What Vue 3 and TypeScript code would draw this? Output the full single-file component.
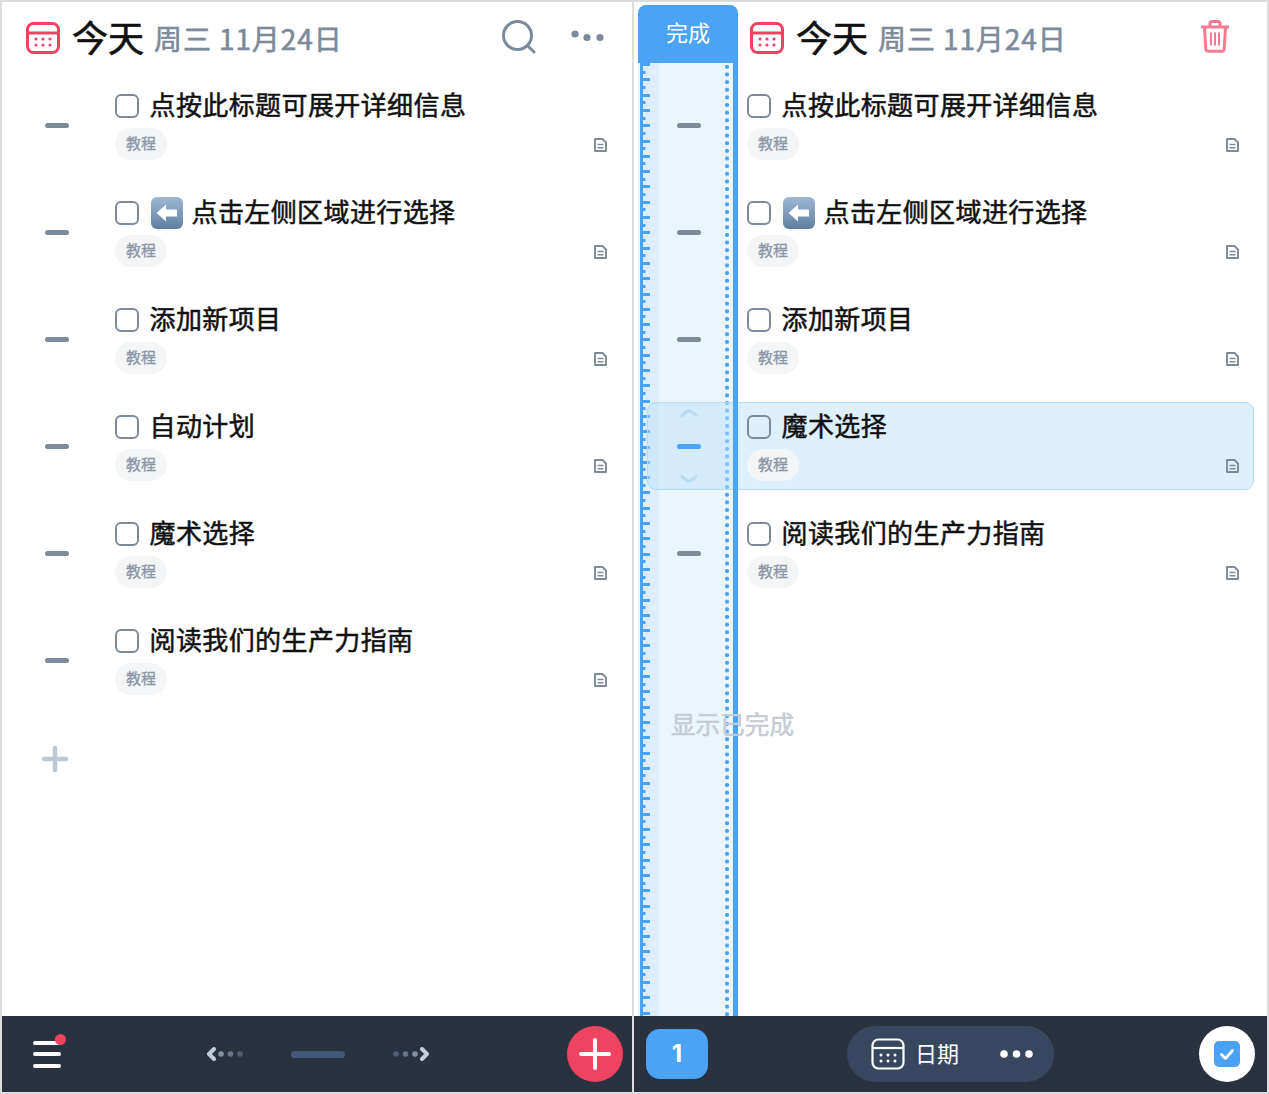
<script setup lang="ts">
const leftRows = [
  { title: "点按此标题可展开详细信息" },
  { title: "点击左侧区域进行选择", arrow: true },
  { title: "添加新项目" },
  { title: "自动计划" },
  { title: "魔术选择" },
  { title: "阅读我们的生产力指南" },
];

const rightRows = [
  { title: "点按此标题可展开详细信息" },
  { title: "点击左侧区域进行选择", arrow: true },
  { title: "添加新项目" },
  { title: "魔术选择", selected: true },
  { title: "阅读我们的生产力指南" },
];

const panes = [
  { id: "left", rows: leftRows },
  { id: "right", rows: rightRows },
];
</script>

<template>
  <div class="screen">
    <section v-for="pane in panes" :key="pane.id" class="pane" :class="pane.id">
      <header class="head">
        <svg class="cal" width="34" height="32" viewBox="0 0 34 32" fill="none">
          <rect x="1.5" y="1.5" width="31" height="29" rx="6" stroke="#ee4462" stroke-width="3" />
          <path d="M2 11h30" stroke="#ee4462" stroke-width="3" />
          <g fill="#ee4462">
            <circle cx="10" cy="17" r="1.6" /><circle cx="17" cy="17" r="1.6" /><circle cx="24" cy="17" r="1.6" />
            <circle cx="10" cy="23" r="1.6" /><circle cx="17" cy="23" r="1.6" /><circle cx="24" cy="23" r="1.6" />
          </g>
        </svg>
        <span class="today">今天</span>
        <span class="date">周三 11月24日</span>
        <template v-if="pane.id === 'left'">
          <svg class="search" width="34" height="34" viewBox="0 0 34 34" fill="none" stroke="#7c8a9a" stroke-width="3" stroke-linecap="round">
            <circle cx="15.500" cy="15.500" r="14" />
            <path d="M26 26l6 6" />
          </svg>
          <svg class="more" width="34" height="12" viewBox="0 0 34 12" fill="#7c8a9a">
            <circle cx="4" cy="4" r="3.600" /><circle cx="16" cy="7.500" r="3.600" /><circle cx="29" cy="7.500" r="3.600" />
          </svg>
        </template>
        <svg v-else class="trash" width="28" height="33" viewBox="0 0 28 33" fill="none" stroke="#f77a92" stroke-width="3" stroke-linejoin="round">
          <path d="M1 7h26" stroke-linecap="round" />
          <path d="M9 7V3.500A2 2 0 0 1 11 1.500h6a2 2 0 0 1 2 2V7" />
          <path d="M3.500 7l1.300 22a2.500 2.500 0 0 0 2.500 2.300h13.400a2.500 2.500 0 0 0 2.500-2.300L24.500 7" />
          <path d="M10 12.500v13M14 12.500v13M18 12.500v13" stroke-width="2" />
        </svg>
      </header>

      <template v-if="pane.id === 'right'">
        <div class="strip">
          <div class="strip-head">完成</div>
          <div class="strip-body"></div>
        </div>
        <div class="strip-edge"></div>
      </template>

      <main class="list">
        <article v-for="row in pane.rows" :key="row.title" class="row" :class="{ selected: row.selected }">
          <div class="handle">
            <svg v-if="row.selected" class="chev up" width="18" height="8" viewBox="0 0 18 8" fill="none" stroke="#b6dbf6" stroke-width="3" stroke-linecap="round" stroke-linejoin="round">
              <path d="M2 6.500C5 3.500 7 2 9 2s4 1.500 7 4.500" />
            </svg>
            <span class="minus"></span>
            <svg v-if="row.selected" class="chev down" width="18" height="8" viewBox="0 0 18 8" fill="none" stroke="#b6dbf6" stroke-width="3" stroke-linecap="round" stroke-linejoin="round">
              <path d="M2 1.500C5 4.500 7 6 9 6s4-1.500 7-4.500" />
            </svg>
          </div>
          <div class="body">
            <div class="title-line">
              <span class="check"></span>
              <svg v-if="row.arrow" class="emoji" width="32" height="32" viewBox="0 0 32 32">
                <defs>
                  <linearGradient :id="pane.id + 'arrowbg'" x1="0" y1="0" x2="0" y2="1">
                    <stop offset="0" stop-color="#9db8d6" />
                    <stop offset="1" stop-color="#5f7f9f" />
                  </linearGradient>
                </defs>
                <rect width="32" height="32" rx="6" :fill="`url(#${pane.id}arrowbg)`" />
                <path d="M5.500 16L15 7.500V12.500H26V19.500H15V24.500Z" fill="#fff" />
              </svg>
              <span class="title">{{ row.title }}</span>
            </div>
            <span class="tag">教程</span>
          </div>
          <svg class="doc" width="13" height="14" viewBox="0 0 13 14" fill="none" stroke="#7c8a9a" stroke-width="1.900" stroke-linejoin="round">
            <path d="M1 1h7.500L12 4.500V13H1Z" />
            <path d="M3.500 6.500h6M3.500 9.800h6" stroke-width="1.400" />
          </svg>
        </article>
        <div class="add">
          <svg width="26" height="26" viewBox="0 0 26 26" stroke="#bcc8d3" stroke-width="4.500" stroke-linecap="round">
            <path d="M2 13h22M13 2v22" />
          </svg>
        </div>
        <div v-if="pane.id === 'right'" class="show-done">显示已完成</div>
      </main>

      <footer class="bar">
        <template v-if="pane.id === 'left'">
          <div class="menu">
            <span></span><span></span><span></span>
            <i class="dot"></i>
          </div>
          <nav class="swipe">
            <svg width="38" height="14" viewBox="0 0 38 14">
              <path d="M8 2L3 7l5 5" fill="none" stroke="#c3ccd7" stroke-width="4" stroke-linecap="round" stroke-linejoin="round" />
              <circle cx="15" cy="7" r="2.800" fill="#8492a6" /><circle cx="24.500" cy="7" r="2.800" fill="#67758b" /><circle cx="34" cy="7" r="2.800" fill="#515f77" />
            </svg>
            <span class="pill-line"></span>
            <svg width="38" height="14" viewBox="0 0 38 14">
              <circle cx="4" cy="7" r="2.800" fill="#515f77" /><circle cx="13.500" cy="7" r="2.800" fill="#67758b" /><circle cx="23" cy="7" r="2.800" fill="#8492a6" />
              <path d="M30 2l5 5-5 5" fill="none" stroke="#c3ccd7" stroke-width="4" stroke-linecap="round" stroke-linejoin="round" />
            </svg>
          </nav>
          <button class="round red">
            <svg width="32" height="32" viewBox="0 0 32 32" stroke="#fff" stroke-width="4" stroke-linecap="round">
              <path d="M2 16h28M16 2v28" />
            </svg>
          </button>
        </template>
        <template v-else>
          <div class="count">1</div>
          <div class="date-pill">
            <svg width="34" height="32" viewBox="0 0 34 32" fill="none" stroke="#fff" stroke-width="2.200">
              <rect x="1.500" y="1.500" width="31" height="29" rx="6" />
              <path d="M2 10h30" />
              <g fill="#fff" stroke="none">
                <circle cx="10" cy="17" r="1.500" /><circle cx="17" cy="17" r="1.500" /><circle cx="24" cy="17" r="1.500" />
                <circle cx="10" cy="23" r="1.500" /><circle cx="17" cy="23" r="1.500" /><circle cx="24" cy="23" r="1.500" />
              </g>
            </svg>
            <span class="pill-text">日期</span>
            <svg class="pill-more" width="33" height="10" viewBox="0 0 33 10" fill="#fff">
              <circle cx="4" cy="5" r="3.800" /><circle cx="16.500" cy="5" r="3.800" /><circle cx="29" cy="5" r="3.800" />
            </svg>
          </div>
          <button class="round white">
            <svg width="26" height="26" viewBox="0 0 26 26">
              <rect width="26" height="26" rx="5" fill="#4aa3f5" />
              <path d="M7.500 13.500l4 4 7-8" fill="none" stroke="#fff" stroke-width="2.800" stroke-linecap="round" stroke-linejoin="round" />
            </svg>
          </button>
        </template>
      </footer>
    </section>
  </div>
</template>

<style>
html,
body {
  margin: 0;
  background: #dcdcdc;
}
</style>

<style scoped>
.screen {
  display: grid;
  grid-template-columns: 630px 633px;
  gap: 2px;
  width: 1269px;
  height: 1094px;
  padding: 2px;
  box-sizing: border-box;
  background: #dcdcdc;
  font-family: "Noto Sans CJK SC", "Noto Sans", sans-serif;
}

.pane {
  position: relative;
  display: flex;
  flex-direction: column;
  min-width: 0;
  overflow: hidden;
  background: #fff;
}

.head {
  display: flex;
  align-items: center;
  flex: none;
  height: 72px;
  padding: 0 27px 0 24px;
  box-sizing: border-box;
}

.right .head {
  padding-left: 116px;
  padding-right: 38px;
}

.cal {
  flex: none;
  margin-right: 12px;
}

.today {
  padding-bottom: 4px;
  font-size: 36px;
  line-height: 44px;
  color: #111;
  -webkit-text-stroke: 0.7px #111;
}

.date {
  margin-left: 10px;
  font-size: 28px;
  letter-spacing: 0.9px;
  line-height: 36px;
  color: #7d8a9a;
  -webkit-text-stroke: 0.6px #7d8a9a;
  white-space: nowrap;
}

.search {
  margin-left: auto;
  margin-top: -3px;
}

.more {
  margin-left: 35px;
  margin-top: -4px;
}

.trash {
  margin-left: auto;
  margin-top: -3px;
}

.strip {
  position: absolute;
  z-index: 1;
  top: 3px;
  left: 4px;
  bottom: 76px;
  width: 100px;
  display: flex;
  flex-direction: column;
}

.strip-head {
  flex: none;
  height: 58px;
  border-radius: 8px 8px 0 0;
  background: #4aa3f5;
  color: #fff;
  font-size: 22px;
  line-height: 52px;
  text-align: center;
}

.strip-body {
  flex: 1;
  background-color: #eaf5fd;
  background-image:
    linear-gradient(#4aa3f5 0 100%),
    repeating-linear-gradient(#4aa3f5 0 3px, transparent 3px 15.3px),
    repeating-linear-gradient(transparent 0 7.65px, #4aa3f5 7.65px 10.65px, transparent 10.65px 15.3px),
    radial-gradient(circle, #4aa3f5 1.800px, transparent 2.300px),
    linear-gradient(#dceefb 0 100%);
  background-repeat: no-repeat, no-repeat, no-repeat, repeat-y, no-repeat;
  background-size:
    3px 100%,
    10px 100%,
    5.500px 100%,
    6px 7.650px,
    19px 100%;
  background-position:
    2px 0,
    2px 0,
    2px 0,
    86px 0,
    2px 0;
}

.strip-edge {
  position: absolute;
  z-index: 3;
  top: 61px;
  left: 99px;
  bottom: 76px;
  width: 5px;
  background: #4aa3f5;
}

.list {
  flex: 1;
  min-height: 0;
  padding-top: 7px;
}

.row {
  position: relative;
  z-index: 2;
  display: flex;
  align-items: center;
  width: 607px;
  height: 88px;
  margin: 0 0 19px 13px;
  box-sizing: border-box;
  border: 1px solid transparent;
  border-radius: 9px;
}

.row.selected {
  background: rgba(188, 224, 250, 0.48);
  border-color: #b6dbf6;
}

.handle {
  position: relative;
  flex: none;
  width: 99px;
  height: 100%;
  padding-left: 29px;
  box-sizing: border-box;
  display: flex;
  align-items: center;
}

.minus {
  display: block;
  width: 24px;
  height: 5px;
  border-radius: 3px;
  background: #7c8a9a;
}

.selected .minus {
  background: #4aa3f5;
}

.chev {
  position: absolute;
  left: 32px;
}

.chev.up {
  top: 6px;
}

.chev.down {
  bottom: 6px;
}

.body {
  flex: 1;
  display: flex;
  flex-direction: column;
  align-items: flex-start;
  min-width: 0;
}

.title-line {
  display: flex;
  align-items: center;
  height: 32px;
  gap: 11px;
}

.check {
  flex: none;
  width: 24px;
  height: 24px;
  margin-left: -0.5px;
  box-sizing: border-box;
  border: 2.500px solid #7c8a9a;
  border-radius: 6px;
}

.emoji {
  flex: none;
  margin: 0 -2px 0 1px;
}

.title {
  padding-bottom: 4px;
  font-size: 26px;
  letter-spacing: 0.4px;
  line-height: 32px;
  color: #111;
  -webkit-text-stroke: 0.5px #111;
  white-space: nowrap;
}

.tag {
  margin-top: 6px;
  width: 52px;
  height: 32px;
  border-radius: 16px;
  background: #f3f5f7;
  color: #8b95a3;
  font-size: 15px;
  -webkit-text-stroke: 0.3px #8b95a3;
  line-height: 30px;
  text-align: center;
}

.doc {
  flex: none;
  align-self: flex-end;
  margin: 0 14px 16px 0;
}

.add {
  height: 26px;
  margin: 42px 0 0 40px;
  width: 26px;
}

.add svg {
  display: block;
}

.show-done {
  position: relative;
  z-index: 4;
  margin: 41px 0 0 37px;
  font-size: 24.600px;
  line-height: 34px;
  color: #c5cbd3;
  -webkit-text-stroke: 0.5px #c5cbd3;
}

.bar {
  flex: none;
  display: grid;
  grid-template-columns: 1fr auto 1fr;
  align-items: center;
  height: 76px;
  padding: 0 9px;
  box-sizing: border-box;
  background: #2a3240;
}

.right .bar {
  padding: 0 12px;
}

.menu {
  position: relative;
  display: flex;
  flex-direction: column;
  gap: 7.500px;
  width: 28px;
  margin-left: 22px;
}

.menu span {
  display: block;
  height: 4px;
  border-radius: 2px;
  background: #fff;
}

.dot {
  position: absolute;
  top: -7px;
  right: -5px;
  width: 11px;
  height: 11px;
  border-radius: 50%;
  background: #ee4462;
}

.swipe {
  display: flex;
  align-items: center;
  gap: 47px;
  margin-left: 2px;
}

.swipe svg {
  display: block;
}

.pill-line {
  display: block;
  width: 54px;
  height: 7px;
  border-radius: 4px;
  background: #44597a;
}

.round {
  justify-self: end;
  display: flex;
  align-items: center;
  justify-content: center;
  width: 56px;
  height: 56px;
  padding: 0;
  border: none;
  border-radius: 50%;
}

.red {
  background: #ee4462;
}

.white {
  background: #fff;
}

.count {
  width: 62px;
  height: 50px;
  border-radius: 14px;
  background: #4aa3f5;
  color: #fff;
  font-family: "Inter", "Noto Sans", sans-serif;
  font-size: 24px;
  font-weight: 700;
  line-height: 50px;
  text-align: center;
}

.date-pill {
  display: flex;
  align-items: center;
  width: 207px;
  height: 56px;
  padding: 0 21px 0 24px;
  box-sizing: border-box;
  border-radius: 28px;
  background: #38475f;
}

.pill-text {
  margin-left: 10px;
  padding-bottom: 4px;
  font-size: 22px;
  line-height: 30px;
  color: #fff;
}

.pill-more {
  margin-left: auto;
}
</style>
